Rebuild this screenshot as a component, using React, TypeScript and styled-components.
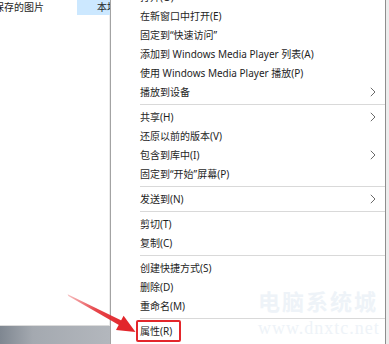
import { createGlobalStyle, styled } from "styled-components";

const GlobalStyle = createGlobalStyle`
  html, body {
    margin: 0;
    padding: 0;
    background: #ffffff;
    overflow: hidden;
  }
`;

const Screen = styled.div`
  position: relative;
  width: 389px;
  height: 344px;
  display: flex;
  overflow: hidden;
  font-family: "Noto Sans", "Noto Sans CJK SC", sans-serif;
  font-size: 10px;
  color: #1e1e1e;
`;

const Explorer = styled.section`
  width: 110px;
  display: flex;
  flex-direction: column;
  background: #ffffff;
`;

const FileRow = styled.div`
  height: 15px;
  display: flex;
  align-items: center;
  justify-content: space-between;
`;

const FileName = styled.span`
  margin-left: -6px;
  margin-top: -3px;
  white-space: nowrap;
`;

const TypeCell = styled.span`
  width: 33px;
  height: 15px;
  padding: 0 0 3px 20px;
  box-sizing: border-box;
  background: #cce8ff;
  display: flex;
  align-items: center;
  white-space: nowrap;
  overflow: hidden;
`;

const Blank = styled.div`
  flex: 1;
  border-right: 1px solid #ececec;
  border-bottom: 1px solid #dcdcdc;
`;

const Taskbar = styled.div`
  height: 18px;
  background: linear-gradient(90deg, #7f8791 0%, #a4a9b0 30%, #b3b7bd 100%);
`;

const Menu = styled.nav`
  width: 276px;
  box-sizing: border-box;
  margin-top: -13px;
  border-left: 1px solid #a3a3a3;
  border-right: 1px solid #8e8e8e;
  background: #ffffff;
  display: flex;
  flex-direction: column;
`;

const Item = styled.div`
  height: 19px;
  flex-shrink: 0;
  display: flex;
  align-items: center;
  justify-content: space-between;
  padding: 0 9px 0 29px;
  white-space: nowrap;
`;

const Label = styled.span<{ $marked?: boolean }>`
  position: relative;

  &::before {
    content: "";
    display: ${(p) => (p.$marked ? "block" : "none")};
    position: absolute;
    left: -4px;
    right: -9px;
    top: -3px;
    bottom: -4px;
    border: 2.5px solid #e3262b;
    border-radius: 2px;
  }
`;

const Separator = styled.div`
  height: 1px;
  flex-shrink: 0;
  margin: 3px 0 2px 29px;
  background: #d9d9d9;
`;

const Edge = styled.div`
  flex: 1;
  background: #ececec;
`;

const Overlay = styled.svg`
  position: absolute;
  left: 0;
  top: 0;
  pointer-events: none;
`;

const Watermark = styled.div`
  position: absolute;
  left: 258px;
  top: 284px;
  display: flex;
  flex-direction: column;
  gap: 2px;
  color: #eef3f8;
  pointer-events: none;
  white-space: nowrap;
`;

const MarkTitle = styled.span`
  font-size: 22px;
  font-weight: bold;
  letter-spacing: 2px;
`;

const MarkUrl = styled.span`
  font-family: "Liberation Serif", serif;
  font-size: 18px;
  letter-spacing: 1px;
`;

const Chevron = () => (
  <svg width="6" height="10" viewBox="0 0 6 10">
    <path d="M0.8 0.8 L5 5 L0.8 9.2" fill="none" stroke="#6b6b6b" strokeWidth="1" />
  </svg>
);

type Entry = { label: string; sub?: boolean; marked?: boolean } | "sep";

const entries: Entry[] = [
  { label: "打开(O)" },
  { label: "在新窗口中打开(E)" },
  { label: "固定到“快速访问”" },
  { label: "添加到 Windows Media Player 列表(A)" },
  { label: "使用 Windows Media Player 播放(P)" },
  { label: "播放到设备", sub: true },
  "sep",
  { label: "共享(H)", sub: true },
  { label: "还原以前的版本(V)" },
  { label: "包含到库中(I)", sub: true },
  { label: "固定到“开始”屏幕(P)" },
  "sep",
  { label: "发送到(N)", sub: true },
  "sep",
  { label: "剪切(T)" },
  { label: "复制(C)" },
  "sep",
  { label: "创建快捷方式(S)" },
  { label: "删除(D)" },
  { label: "重命名(M)" },
  "sep",
  { label: "属性(R)", marked: true },
];

export default function App() {
  return (
    <Screen>
      <GlobalStyle />
      <Explorer>
        <FileRow>
          <FileName>保存的图片</FileName>
          <TypeCell>本地</TypeCell>
        </FileRow>
        <Blank />
        <Taskbar />
      </Explorer>
      <Menu>
        {entries.map((e, i) =>
          e === "sep" ? (
            <Separator key={i} />
          ) : (
            <Item key={i}>
              <Label $marked={e.marked}>{e.label}</Label>
              {e.sub && <Chevron />}
            </Item>
          )
        )}
      </Menu>
      <Edge />
      <Watermark>
        <MarkTitle>电脑系统城</MarkTitle>
        <MarkUrl>www.dnxtc.net</MarkUrl>
      </Watermark>
      <Overlay width="389" height="344" viewBox="0 0 389 344">
        <defs>
          <linearGradient id="tail" x1="68" y1="295" x2="124" y2="325" gradientUnits="userSpaceOnUse">
            <stop offset="0" stopColor="#e2262b" stopOpacity="0.3" />
            <stop offset="0.5" stopColor="#e2262b" stopOpacity="0.85" />
            <stop offset="1" stopColor="#e2262b" stopOpacity="1" />
          </linearGradient>
        </defs>
        <polygon points="67.6,294.2 68.4,296 121.5,326.6 124,321.8" fill="url(#tail)" />
        <polygon points="135.5,332 116,330 123.6,315.8" fill="#e2262b" />
      </Overlay>
    </Screen>
  );
}
